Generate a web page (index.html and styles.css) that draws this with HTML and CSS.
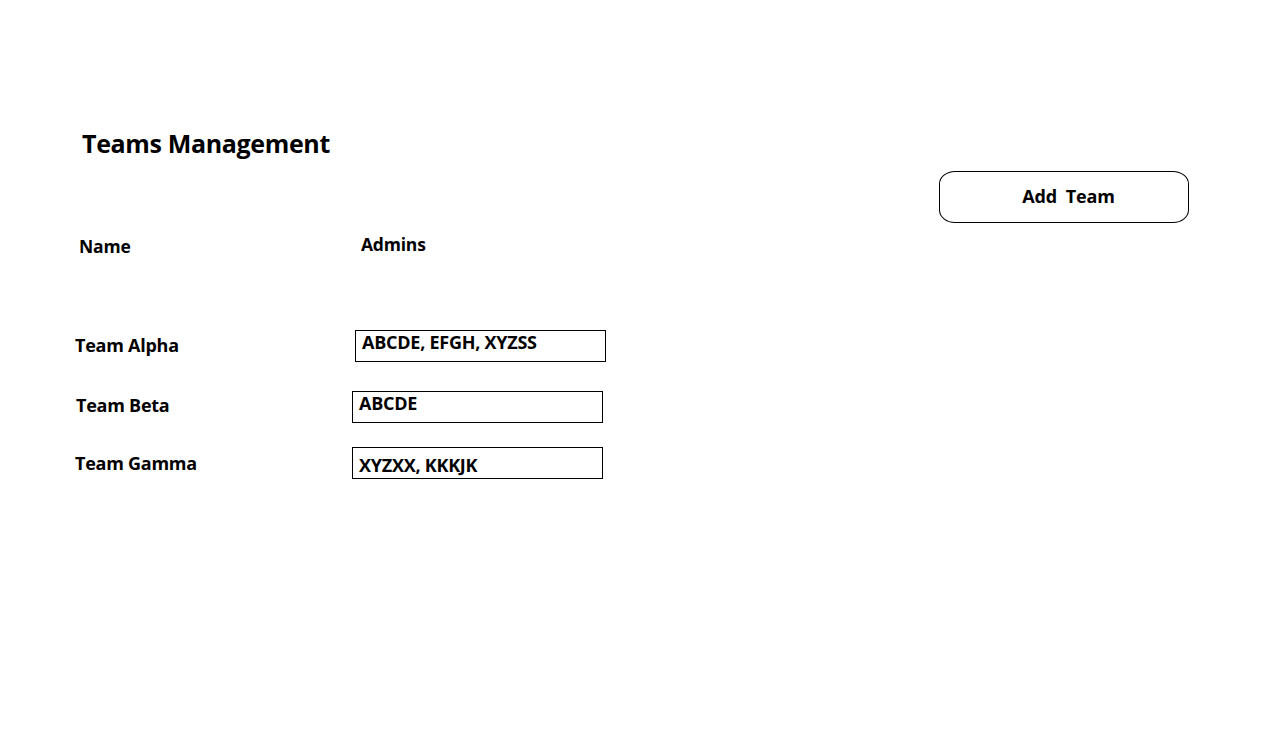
FILE: index.html
```html
<!DOCTYPE html>
<html lang="en">
<head>
<meta charset="utf-8">
<title>Teams Management</title>
<link rel="stylesheet" href="styles.css">
</head>
<body>
<main class="page">
  <h1 class="title">Teams Management</h1>
  <div class="toolbar">
    <button class="add-btn" type="button">Add&nbsp; Team</button>
  </div>
  <div class="table">
    <div class="head-row">
      <div class="col-name">Name</div>
      <div class="col-admins">Admins</div>
    </div>
    <div class="row row-alpha">
      <div class="team">Team Alpha</div>
      <div class="admins">ABCDE, EFGH, XYZSS</div>
    </div>
    <div class="row row-beta">
      <div class="team">Team Beta</div>
      <div class="admins">ABCDE</div>
    </div>
    <div class="row row-gamma">
      <div class="team">Team Gamma</div>
      <div class="admins">XYZXX, KKKJK</div>
    </div>
  </div>
</main>
</body>
</html>
```
FILE: styles.css
```css
* { box-sizing: border-box; }
html, body { margin: 0; padding: 0; background: #fff; }
body {
  font-family: "Open Sans", "Liberation Sans", sans-serif;
  font-weight: 700;
  color: #000;
  width: 1279px;
  height: 743px;
  overflow: hidden;
}
.page { padding: 126px 0 0 0; }
.title {
  margin: 0 0 0 82px;
  font-size: 25px;
  line-height: 34px;
  font-weight: 700;
  letter-spacing: -0.35px;
}
.toolbar {
  display: flex;
  justify-content: flex-end;
  padding-right: 90px;
  margin-top: 11px;
}
.add-btn {
  width: 250px;
  height: 52px;
  border: 1px solid #000;
  border-radius: 16px / 13px;
  background: #fff;
  font-family: inherit;
  font-weight: 700;
  font-size: 18px;
  letter-spacing: -0.2px;
  color: #000;
  padding: 0 0 2px 9px;
}
.head-row {
  display: flex;
  font-size: 17.5px;
  letter-spacing: -0.2px;
  height: 24px;
  margin-top: 9px;
}
.col-name { width: 361px; padding-left: 79px; padding-top: 2px; }
.row {
  display: flex;
  align-items: flex-start;
  font-size: 18px;
  letter-spacing: -0.25px;
}
.team { padding-top: 3px; }
.admins {
  width: 251px;
  height: 32px;
  border: 1px solid #000;
  padding: 0 0 0 6px;
  line-height: 23px;
}
.row-alpha { margin-top: 74px; }
.row-alpha .team { width: 355px; padding-left: 75px; }
.row-beta { margin-top: 29px; }
.row-beta .team { width: 352px; padding-left: 76px; padding-top: 2px; }
.row-gamma { margin-top: 24px; }
.row-gamma .team { width: 352px; padding-left: 75px; padding-top: 4px; }
.row-gamma .admins { line-height: 34px; }
```
